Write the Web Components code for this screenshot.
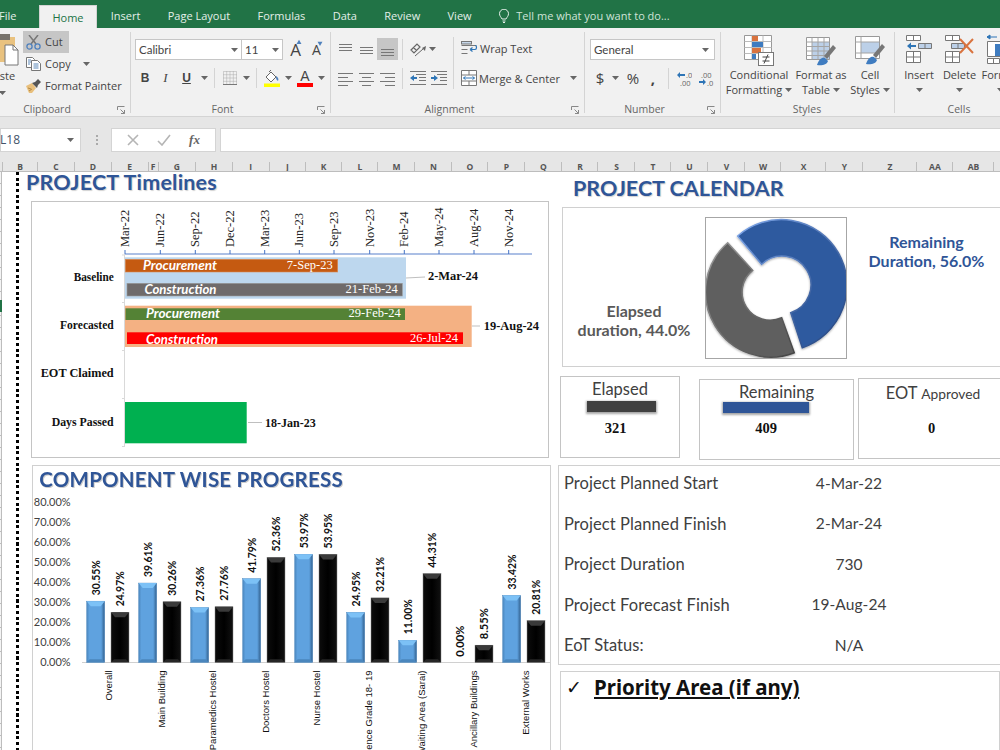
<!DOCTYPE html>
<html>
<head>
<meta charset="utf-8">
<title>Project dashboard</title>
<style>
  html, body { margin: 0; padding: 0; width: 1000px; height: 750px; overflow: hidden; background: #fff; }
</style>
</head>
<body>
<xl-tabs></xl-tabs>
<xl-ribbon></xl-ribbon>
<xl-formula-bar></xl-formula-bar>
<xl-columns></xl-columns>
<xl-sheet></xl-sheet>

<script>
// base class, every part renders its own markup in an open shadow root
class Part extends HTMLElement {
  connectedCallback() {
    if (this.shadowRoot) return;
    var template = document.createElement("TEMPLATE");
    template.innerHTML = this.markup();
    this.attachShadow({ mode: "open" }).appendChild(template.content.cloneNode(true));
  }
  attr(name, fallback) {
    return this.getAttribute(name) || fallback || '';
  }
}

const UI = '"Open Sans", "Noto Sans", sans-serif';
const arrow = `<svg width="7" height="4" viewBox="0 0 7 4"><path d="M0 0h7L3.5 4z" fill="#666"/></svg>`;

// ribbon icons
const ICONS = {
  paste: `<svg width="20" height="34" viewBox="0 0 20 34"><rect x="-6" y="3" width="21" height="25" fill="#e9c27f"/><rect x="-4" y="0" width="14" height="6" fill="#77736c"/><path d="M5 11h8l5 5v15H5z" fill="#fff" stroke="#777"/><path d="M13 11v5h5" fill="none" stroke="#777"/></svg>`,
  cut: `<svg width="15" height="15" viewBox="0 0 15 15"><path d="M3 0l7 9M12 0L5 9" stroke="#777" stroke-width="1.5" fill="none"/><circle cx="3.5" cy="11.5" r="2.6" fill="none" stroke="#4f81bd" stroke-width="1.3"/><circle cx="11.5" cy="11.5" r="2.6" fill="none" stroke="#4f81bd" stroke-width="1.3"/></svg>`,
  copy: `<svg width="15" height="14" viewBox="0 0 15 14"><path d="M.5.5h6l2 2v8h-8z" fill="#fff" stroke="#777"/><path d="M5.5 3.5h6l3 3v7h-9z" fill="#fff" stroke="#777"/><path d="M2 3h3M2 5h3M2 7h2M7.500 7h5M7.500 9h5M7.500 11h5" stroke="#5b87b8"/></svg>`,
  painter: `<svg width="15" height="14" viewBox="0 0 15 14"><path d="M0 7l6-3 4 5-4 5H3z" fill="#e8bf7c"/><path d="M2 9l3 1M3 12l3-2" stroke="#b58a45"/><path d="M6 4l3-1 3-3 3 3-3 3-1 3z" fill="#555"/></svg>`,
  borders: `<svg width="14" height="14" viewBox="0 0 14 14"><path d="M.5.5h13v13H.5zM7 .5v13M.5 7h13M.5 3.700h13M.5 10.300h13M3.700.5v13M10.300.5v13" fill="none" stroke="#aaa" stroke-dasharray="1 1"/><path d="M0 13.500h14" stroke="#777"/></svg>`,
  fill: `<svg width="16" height="17" viewBox="0 0 16 17"><path d="M2 7l5-5 5 5-5 5z" fill="#fff" stroke="#666"/><path d="M5 2l2-2" stroke="#666"/><path d="M12 6c2 1 3 3 2 5-2-1-2-3-2-5z" fill="#4f81bd"/><rect x="0" y="13.500" width="16" height="3.500" fill="#ffff00"/></svg>`,
  wrap: `<svg width="17" height="15" viewBox="0 0 17 15"><path d="M.5.5h9M.5 4.500h15M.5 8.500h6M.5 12.500h6" stroke="#777"/><rect x=".5" y=".5" width="10" height="2.500" fill="#c6d7ea" stroke="#777"/><path d="M9 8.500h5c2 0 2-4 0-4M9 8.500l2.500-2M9 8.500l2.500 2" fill="none" stroke="#2e75b6" stroke-width="1.200"/></svg>`,
  merge: `<svg width="16" height="16" viewBox="0 0 16 16"><path d="M.5.5h15v15H.5zM.5 5h15M.5 11h15M8 .5V5M8 11v4.500" fill="#fff" stroke="#777"/><path d="M2.500 8h11M2.500 8l2-1.500M2.500 8l2 1.500M13.500 8l-2-1.500M13.500 8l-2 1.500" fill="none" stroke="#2e75b6"/></svg>`,
  orient: `<svg width="16" height="15" viewBox="0 0 16 15"><path d="M1 8l6-6 3 3-6 6zM3.500 5.500l3 3" fill="none" stroke="#666" stroke-width="1.200"/><path d="M5 14l8-7" stroke="#666"/><path d="M16 4l-1 5-3-3z" fill="#666"/></svg>`,
  indentL: `<svg width="16" height="14" viewBox="0 0 16 14"><path d="M6 3.500h10M9 6.500h7M9 9.500h7M0 .5h16M0 13.500h16" stroke="#777"/><path d="M0 7l4-3v2h3v2H4v2z" fill="#2e75b6"/></svg>`,
  indentR: `<svg width="16" height="14" viewBox="0 0 16 14"><path d="M6 3.500h10M9 6.500h7M9 9.500h7M0 .5h16M0 13.500h16" stroke="#777"/><path d="M7 7L3 4v2H0v2h3v2z" fill="#2e75b6"/></svg>`,
  decUp: `<svg width="15" height="15" viewBox="0 0 15 15"><path d="M0 4l3-3v2h5v2H3v2z" fill="#2e75b6"/><text x="9" y="6.500" font-family="Open Sans" font-size="7.500" fill="#666">.0</text><text x="3" y="14.500" font-family="Open Sans" font-size="7.500" fill="#666">.00</text></svg>`,
  decDown: `<svg width="15" height="15" viewBox="0 0 15 15"><text x="2" y="6.500" font-family="Open Sans" font-size="7.500" fill="#666">.00</text><path d="M7 11L4 8v2H0v2h4v2z" fill="#2e75b6"/><text x="8" y="14.500" font-family="Open Sans" font-size="7.500" fill="#666">.0</text></svg>`,
  cond: `<svg width="30" height="32" viewBox="0 0 30 32"><path d="M.5.500h27v24H.5z" fill="#fff" stroke="#999"/><path d="M.5 6.500h27M.5 12.500h27M.5 18.500h27M8 .5v24M19 .5v24" stroke="#bbb"/><rect x="8" y="1" width="6" height="5" fill="#d9733f"/><rect x="8" y="7" width="11" height="5" fill="#3f7cc0"/><rect x="8" y="13" width="9" height="5" fill="#d9733f"/><rect x="8" y="19" width="4" height="5" fill="#3f7cc0"/><rect x="14.500" y="17.500" width="15" height="13" fill="#fff" stroke="#777"/><path d="M18.500 22h7M18.500 26h7M24 19.500l-4 9" stroke="#444"/></svg>`,
  table: `<svg width="30" height="30" viewBox="0 0 30 30"><path d="M.5.500h23v22H.5z" fill="#fff" stroke="#999"/><rect x="6" y="5" width="17" height="17" fill="#bcd0e8"/><path d="M.5 5h23M.5 9.500h23M.5 14h23M.5 18.500h23M6 .5v22M12 .5v22M18 .5v22" stroke="#a4a4a4"/><path d="M18 19l9-11 3 3-9 11z" fill="#777"/><path d="M19 21c-3-1-6 1-8 7 4 1 10 0 11-4z" fill="#3f7cc0"/></svg>`,
  cell: `<svg width="30" height="30" viewBox="0 0 30 30"><path d="M.5.500h24v22H.5z" fill="#fff" stroke="#999"/><rect x="6" y="6" width="18" height="11" fill="#bcd0e8"/><path d="M.5 6h24M.5 17h24M6 .5v22" stroke="#a4a4a4"/><path d="M18 19l9-11 3 3-9 11z" fill="#777"/><path d="M19 21c-3-1-6 1-8 7 4 1 10 0 11-4z" fill="#3f7cc0"/></svg>`,
  insert: `<svg width="26" height="28" viewBox="0 0 26 28"><path d="M.5.500h14v5H.5zM7.500.5v5M.5 16.500h14v11H.5zM.5 22h14M7.500 16.500v11" fill="#fff" stroke="#777"/><path d="M12.500 8.500h13v5h-13zM19 8.500v5" fill="#bcd0e8" stroke="#777"/><path d="M1 11l4-3.500V10h5v2H5v2.500z" fill="#2e75b6"/></svg>`,
  del: `<svg width="30" height="28" viewBox="0 0 30 28"><path d="M.5.500h14v5H.5zM7.500.5v5M.5 16.500h14v11H.5zM.5 22h14M7.500 16.500v11" fill="#fff" stroke="#777"/><path d="M6.500 8.500h13v5h-13zM13 8.500v5" fill="#bcd0e8" stroke="#777"/><path d="M15 4l13 14M28 4L15 18" stroke="#d9733f" stroke-width="2"/></svg>`,
  format: `<svg width="26" height="30" viewBox="0 0 26 30"><path d="M0 3h10M0 3l3-2v4z" stroke="#2e75b6" fill="#2e75b6"/><path d="M.5 7.500h25v15H.5z" fill="#fff" stroke="#777"/><rect x="8" y="10" width="17" height="12" fill="#3f7cc0"/><path d="M.5 24.500h12v5H.5zM6.500 24.500v5" fill="#fff" stroke="#777"/></svg>`
};

const launcher = `<svg class="launch" width="8" height="8" viewBox="0 0 8 8"><path d="M.5 4V.5H7.500M7.500 7.500L3.500 3.500M7.500 4v3.500H4" fill="none" stroke="#888"/></svg>`;

class XlTabs extends Part {
  markup() {
    const names = ['Insert', 'Page Layout', 'Formulas', 'Data', 'Review', 'View'];
    return `
    <style>
      :host { display: flex; height: 28px; background: #217346; color: #e4efe9; font: 11px/1 ${UI}; overflow: hidden; }
      span { display: flex; align-items: center; padding: 3px 13.700px 0; }
      .file { padding: 3px 24px 0 0; width: 16px; margin-left: -1px; box-sizing: content-box; }
      .home { background: #f1f1f1; color: #217346; margin-top: 5px; padding: 0; width: 58px; justify-content: center; border: 1px solid #d4d4d4; border-bottom: 0; box-sizing: border-box; height: 23px; }
      .tell { padding: 3px 0 0 0; margin-left: 14px; gap: 7px; white-space: nowrap; color: #cfe3d8; }
    </style>
    <span class="file">File</span><span class="home">Home</span>
    ${names.map(n => `<span>${n}</span>`).join('')}
    <span class="tell">
      <svg width="10" height="14" viewBox="0 0 10 14"><path d="M3 10C2 8 .5 7 .5 4.700a4.500 4.500 0 0 1 9 0C9.500 7 8 8 7 10zM3.500 12h3M4 13.500h2" fill="none" stroke="#e4efe9"/></svg>
      Tell me what you want to do...
    </span>`;
  }
}

class XlGroup extends Part {
  markup() {
    return `
    <style>
      :host { display: flex; flex-direction: column; flex: none; box-sizing: border-box; width: ${this.attr('w')}px; margin: 4px 0 3px; border-right: 1px solid #d4d4d4; position: relative; }
      .body { flex: 1; min-height: 0; }
      .label { height: 16px; margin-bottom: -4px; text-align: center; font: 10.500px/16px ${UI}; color: #666; }
      .launch { position: absolute; right: 5px; bottom: -1px; }
    </style>
    <div class="body"><slot></slot></div>
    <div class="label" style="${this.attr('label-style')}">${this.attr('label')}</div>
    ${this.hasAttribute('launch') ? launcher : ''}`;
  }
}

class ClipboardTools extends Part {
  markup() {
    return `
    <style>
      :host { display: flex; font: 11px/1 ${UI}; color: #444; }
      .paste { width: 23px; display: flex; flex-direction: column; padding-top: 2px; overflow: hidden; }
      .paste b { font-weight: 400; margin: 2px 0 0 -13px; }
      .paste .a { margin: 8px 0 0 -1px; line-height: 4px; }
      .rows { display: flex; flex-direction: column; margin-top: -1px; }
      .row { display: flex; align-items: center; gap: 4px; height: 22px; padding-left: 3px; white-space: nowrap; }
      .row span { margin-top: -2px; }
      .cut { width: 46px; background: #c6c6c6; box-sizing: border-box; }
      .row .a { margin: 0 0 0 8px; display: flex; }
    </style>
    <div class="paste">${ICONS.paste}<b>Paste</b><span class="a">${arrow}</span></div>
    <div class="rows">
      <div class="row cut">${ICONS.cut}<span>Cut</span></div>
      <div class="row">${ICONS.copy}<span>Copy</span><span class="a">${arrow}</span></div>
      <div class="row">${ICONS.painter}<span>Format Painter</span></div>
    </div>`;
  }
}

class FontTools extends Part {
  markup() {
    return `
    <style>
      :host { display: flex; flex-direction: column; padding: 7px 0 0 4px; font: 11px/1 ${UI}; color: #444; }
      .row { display: flex; align-items: center; }
      .box { display: flex; align-items: center; justify-content: space-between; height: 21px; box-sizing: border-box; background: #fff; border: 1px solid #c6c6c6; padding: 0 3px; font-family: Lato, sans-serif; font-size: 11.500px; }
      .a1 { font-size: 17px; width: 21px; text-align: center; margin-left: 2px; position: relative; }
      .a2 { font-size: 14px; width: 21px; text-align: center; position: relative; }
      .a1 svg, .a2 svg { position: absolute; left: 10px; top: -2px; }
      .two { margin-top: 8px; height: 20px; }
      .two > span { display: flex; justify-content: center; align-items: center; flex: none; height: 20px; }
      .b { font: bold 12px "Liberation Sans", sans-serif; }
      .i { font: italic 13px "Liberation Serif", serif; }
      .u { font: 12px "Liberation Sans", sans-serif; text-decoration: underline; font-weight: bold; }
      .sep { width: 1px; height: 21px; background: #d4d4d4; }
      .col { flex-direction: column; font: 14px/13px "Liberation Sans", sans-serif; }
      .col i { display: block; width: 16px; height: 4px; background: #f00; }
    </style>
    <div class="row">
      <div class="box" style="width:107px"><span>Calibri</span>${arrow}</div>
      <div class="box" style="width:42px;margin-left:-1px"><span>11</span>${arrow}</div>
      <div class="a1">A<svg width="8" height="6" viewBox="0 0 18 17"><path d="M2 14L9 2l7 12z" fill="#4f81bd"/></svg></div>
      <div class="a2">A<svg width="8" height="6" viewBox="0 0 18 17"><path d="M2 2l7 12 7-12z" fill="#4f81bd"/></svg></div>
    </div>
    <div class="row two">
      <span class="b" style="width:20px">B</span><span class="i" style="width:21px">I</span><span class="u" style="width:21px">U</span>
      <span style="width:14px">${arrow}</span><span style="width:3px"></span><span class="sep"></span><span style="width:5px"></span>
      <span style="width:20px">${ICONS.borders}</span><span style="width:12px">${arrow}</span><span style="width:4px"></span><span class="sep"></span>
      <span style="width:4px"></span><span style="width:21px">${ICONS.fill}</span><span style="width:12px">${arrow}</span>
      <span class="col" style="width:22px">A<i></i></span><span style="width:11px">${arrow}</span>
    </div>`;
  }
}

function rules(widths, align) {
  const y = [2, 6, 10, 14];
  return `<svg width="15" height="15" viewBox="0 0 15 15"><path d="${widths.map((w, i) => {
    const x = align === 'l' ? 0 : align === 'r' ? 15 - w : (15 - w) / 2;
    return `M${x} ${y[i] + .5}h${w}`;
  }).join('')}" stroke="#777"/></svg>`;
}

class AlignTools extends Part {
  markup() {
    const vert = (top) => `<svg width="15" height="15" viewBox="0 0 15 15"><path d="M1 ${top + .5}h13M1 ${top + 3.5}h13M1 ${top + 6.5}h13" stroke="#777"/></svg>`;
    return `
    <style>
      :host { display: flex; font: 11px/1 ${UI}; color: #444; }
      .grid { display: grid; grid-template-columns: 21px 21px 21px 9px 21px 21px; grid-template-rows: 22px 20px; row-gap: 8px; width: 122px; padding: 6px 0 0 4px; box-sizing: border-box; align-items: center; justify-items: center; }
      .on { background: #c6c6c6; width: 21px; height: 22px; display: flex; align-items: center; justify-content: center; }
      .sp { width: 1px; height: 21px; background: #d4d4d4; }
      .wide { grid-column: span 2; justify-self: start; display: flex; align-items: center; gap: 3px; padding-left: 3px; }
      .sep { width: 1px; height: 52px; margin-top: 5px; background: #d4d4d4; }
      .right { padding: 6px 0 0 7px; display: flex; flex-direction: column; gap: 10px; }
      .line { display: flex; align-items: center; gap: 2px; height: 20px; white-space: nowrap; }
      .line .a { margin-left: 8px; display: flex; }
    </style>
    <div class="grid">
      ${vert(2)}${vert(5)}<div class="on">${vert(7)}</div><span class="sp"></span><span class="wide">${ICONS.orient}${arrow}</span>
      ${rules([15, 10, 15, 10], 'l')}${rules([15, 9, 15, 9], 'c')}${rules([15, 10, 15, 10], 'r')}<span class="sp"></span>${ICONS.indentL}${ICONS.indentR}
    </div>
    <div class="sep"></div>
    <div class="right">
      <div class="line">${ICONS.wrap}<span>Wrap Text</span></div>
      <div class="line">${ICONS.merge}<span>Merge &amp; Center</span><span class="a">${arrow}</span></div>
    </div>`;
  }
}

class NumberTools extends Part {
  markup() {
    return `
    <style>
      :host { display: flex; flex-direction: column; padding: 7px 0 0 5px; font: 11.500px/1 ${UI}; color: #444; }
      .box { display: flex; align-items: center; justify-content: space-between; width: 125px; height: 21px; box-sizing: border-box; background: #fff; border: 1px solid #c6c6c6; padding: 0 5px 0 3px; font-family: Lato, sans-serif; }
      .row { display: flex; margin-top: 8px; height: 20px; }
      .row > span { display: flex; align-items: center; justify-content: center; flex: none; }
      .s { font-size: 15px; }
      .sp { width: 1px; height: 21px; background: #d4d4d4; margin: 0 7px 0 0; }
    </style>
    <div class="box"><span>General</span>${arrow}</div>
    <div class="row">
      <span class="s" style="width:20px">$</span><span style="width:10px">${arrow}</span>
      <span class="s" style="width:26px">%</span><span class="s" style="width:14px;font-weight:700">,</span>
      <span style="width:8px"></span><span class="sp"></span>
      <span style="width:16px">${ICONS.decUp}</span><span style="width:6px"></span><span style="width:16px">${ICONS.decDown}</span>
    </div>`;
  }
}

class BigButton extends Part {
  markup() {
    return `
    <style>
      :host { display: flex; flex-direction: column; align-items: center; flex: none; width: ${this.attr('w')}px; font: 11px/15px ${UI}; color: #444; text-align: center; white-space: nowrap; }
      .ic { height: 35px; box-sizing: border-box; padding-top: ${this.attr('pad', '3')}px; display: flex; align-items: flex-start; justify-content: center; }
      .t { height: 15px; display: flex; align-items: center; justify-content: center; gap: 3px; }
    </style>
    <div class="ic">${ICONS[this.attr('icon')]}</div>
    <div class="t">${this.attr('one')}</div>
    <div class="t">${this.attr('two')}${arrow}</div>`;
  }
}

class XlRibbon extends Part {
  markup() {
    return `
    <style>
      :host { display: flex; height: 88px; background: #f1f1f1; overflow: hidden; border-bottom: 1px solid #d4d4d4; box-sizing: content-box; }
    </style>
    <xl-group w="131" label="Clipboard" label-style="width:94px" launch><clipboard-tools></clipboard-tools></xl-group>
    <xl-group w="200" label="Font" label-style="margin-left:-16px" launch><font-tools></font-tools></xl-group>
    <xl-group w="254" label="Alignment" label-style="margin-left:-16px" launch><align-tools></align-tools></xl-group>
    <xl-group w="136" label="Number" label-style="margin-left:-16px" launch><number-tools></number-tools></xl-group>
    <xl-group w="174" label="Styles" label-style="margin-left:-1px">
      <div style="display:flex;padding-left:6px">
        <big-button w="64" icon="cond" one="Conditional" two="Formatting"></big-button>
        <big-button w="60" icon="table" one="Format as" two="Table" pad="5"></big-button>
        <big-button w="38" icon="cell" one="Cell" two="Styles" pad="4"></big-button>
      </div>
    </xl-group>
    <xl-group w="135" label="Cells" label-style="width:128px">
      <div style="display:flex;padding-left:4px">
        <big-button w="40" icon="insert" one="Insert" pad="3"></big-button>
        <big-button w="41" icon="del" one="Delete" pad="3"></big-button>
        <big-button w="40" icon="format" one="Format" pad="2"></big-button>
      </div>
    </xl-group>`;
  }
}

class XlFormulaBar extends Part {
  markup() {
    return `
    <style>
      :host { display: flex; align-items: flex-start; height: 36px; box-sizing: border-box; padding-top: 11px; background: #e6e6e6; font: 12px/1 ${UI}; color: #44546a; }
      .white { background: #fff; height: 24px; box-sizing: border-box; border: 1px solid #d4d4d4; display: flex; align-items: center; }
      .name { width: 81px; justify-content: space-between; padding-right: 6px; margin-right: 30px; position: relative; }
      .name span { margin-left: -1px; }
      .dots { position: absolute; left: 95px; top: 6px; width: 2px; height: 11px; background: repeating-linear-gradient(#aaa 0 2px, transparent 2px 4px); }
      .btns { width: 105px; margin-right: 4px; justify-content: space-around; padding: 0 6px; color: #999; }
      .fx { font: italic bold 13px "Liberation Serif", serif; color: #666; }
      .input { flex: 1; border-right: 0; }
    </style>
    <div class="white name"><span>L18</span>${arrow}<i class="dots"></i></div>
    <div class="white btns">
      <svg width="12" height="12" viewBox="0 0 12 12"><path d="M1 1l10 10M11 1L1 11" stroke="#b5b5b5" stroke-width="1.600"/></svg>
      <svg width="14" height="12" viewBox="0 0 14 12"><path d="M1 7l4 4 8-10" fill="none" stroke="#b5b5b5" stroke-width="1.600"/></svg>
      <span class="fx">fx</span>
    </div>
    <div class="white input"></div>`;
  }
}

class XlColumns extends Part {
  markup() {
    const cols = [
      ['', 3], ['B', 35], ['C', 37], ['D', 37], ['E', 36.500], ['F', 10], ['G', 37.500], ['H', 37], ['I', 36.500], ['J', 36.700],
      ['K', 36], ['L', 36.300], ['M', 37], ['N', 37], ['O', 36], ['P', 37], ['Q', 37], ['R', 36], ['S', 37], ['T', 36], ['U', 37], ['V', 37],
      ['W', 36], ['X', 45], ['Y', 37], ['Z', 54], ['AA', 36], ['AB', 41]];
    return `
    <style>
      :host { display: flex; height: 19px; box-sizing: border-box; background: #e6e6e6; border-bottom: 1px solid #bdbdbd; font: bold 8.500px/1 ${UI}; color: #555; overflow: hidden; }
      span { flex: none; box-sizing: border-box; text-align: center; border-right: 1px solid #bdbdbd; height: 9px; margin-top: 9px; line-height: 9px; }
    </style>
    ${cols.map(c => `<span style="width:${c[1]}px">${c[0]}</span>`).join('')}`;
  }
}

class SectionTitle extends Part {
  markup() {
    return `
    <style>
      :host { display: block; font: 700 ${this.attr('size', '21')}px/1 Lato, sans-serif; letter-spacing: ${this.attr('spacing', '0')}px; color: #2f5597; text-shadow: 1px 1px 1px rgba(0,0,0,.18); white-space: nowrap; }
    </style>
    <slot></slot>`;
  }
}

function fit(x, y, text, len, attrs) {
  return `<text x="${x}" y="${y}" textLength="${len}" lengthAdjust="spacingAndGlyphs" ${attrs || ''}>${text}</text>`;
}

class TimelineChart extends Part {
  markup() {
    const months = ['Mar-22', 'Jun-22', 'Sep-22', 'Dec-22', 'Mar-23', 'Jun-23', 'Sep-23', 'Nov-23', 'Feb-24', 'May-24', 'Aug-24', 'Nov-24'];
    const ticks = [125, 160.300, 195.300, 230, 264.700, 299.300, 334, 369.700, 404.300, 439, 474, 508.700];
    const cats = [['Baseline', 281, 40], ['Forecasted', 329, 53.700], ['EOT Claimed', 377, 73], ['Days Passed', 425.700, 62]];
    return `
    <style>
      :host { display: block; box-sizing: border-box; width: 518px; height: 257px; border: 1px solid #c4c4c4; background: #fff; }
      svg { display: block; }
      .m { font: 12.500px "Liberation Serif", serif; fill: #222; }
      .cat { font: bold 12px "Liberation Serif", serif; fill: #111; }
      .it { font: italic 700 13px Lato, sans-serif; fill: #fff; }
      .d { font: 12.500px "Liberation Serif", serif; fill: #fff; text-anchor: end; }
      .lab { font: bold 13px "Liberation Serif", serif; fill: #111; }
    </style>
    <svg width="516" height="255" viewBox="32 202 516 255">
      <path d="M124.500 254V447M122 302.500h3M122 350.500h3M122 398.500h3M122 446.500h3M122 255h3" stroke="#d9d9d9" fill="none"/>
      <rect x="125" y="257.300" width="281" height="41.400" fill="#bdd7ee"/>
      <rect x="125.300" y="259.300" width="212.400" height="12.700" fill="#c55a11" stroke="#d98a55" stroke-width=".6"/>
      <rect x="127" y="283.300" width="275.300" height="12.700" fill="#6f6b6b" stroke="#9a9a9a" stroke-width=".6"/>
      <rect x="125" y="305.700" width="346.700" height="41.300" fill="#f4b183"/>
      <rect x="125.500" y="308.300" width="279.500" height="11.700" fill="#548235"/>
      <rect x="127" y="332.300" width="336" height="11.700" fill="#ff0000"/>
      <rect x="125" y="402" width="121.700" height="41.300" fill="#00b050"/>
      <path d="M125 254H532" stroke="#8faadc" stroke-width="1.600"/>
      ${ticks.map(x => `<path d="M${x} 250v4" stroke="#4472c4"/>`).join('')}
      ${months.map((m, i) => `<text class="m" transform="translate(${ticks[i] + 4} 247) rotate(-90)">${m}</text>`).join('')}
      ${cats.map(c => fit(113.700 - c[2], c[1], c[0], c[2], 'class="cat"')).join('')}
      ${fit(143, 270, 'Procurement', 74, 'class="it"')}
      ${fit(144.500, 293.700, 'Construction', 72, 'class="it"')}
      ${fit(146, 317.700, 'Procurement', 74, 'class="it"')}
      ${fit(146, 344, 'Construction', 72, 'class="it"')}
      <text class="d" x="332.700" y="269">7-Sep-23</text>
      <text class="d" x="397.700" y="293.300">21-Feb-24</text>
      <text class="d" x="400.700" y="317">29-Feb-24</text>
      <text class="d" x="458" y="341.700">26-Jul-24</text>
      <path d="M406 278l19-1M472 326h8M248 422.500h14" stroke="#bfbfbf" fill="none"/>
      ${fit(428, 280, '2-Mar-24', 50, 'class="lab"')}
      ${fit(483.700, 329.700, '19-Aug-24', 55.300, 'class="lab"')}
      ${fit(265, 427, '18-Jan-23', 50.700, 'class="lab"')}
    </svg>`;
  }
}

class ProgressChart extends Part {
  markup() {
    const data = [
      ['Overall', 30.55, 24.97, 108.300], ['Main Building', 39.61, 30.26, 161.700], ['Paramedics Hostel', 27.36, 27.76, 212.700],
      ['Doctors Hostel', 41.79, 52.36, 265], ['Nurse Hostel', 53.97, 53.95, 316.700], ['Residence Grade 18- 19', 24.95, 32.21, 368.300],
      ['Waiting Area (Sarai)', 11.00, 44.31, 421.700], ['Ancillary Buildings', 0, 8.55, 473.300], ['External Works', 33.42, 20.81, 525]];
    const y0 = 662.300;
    const bar = (x, v, kind) => {
      if (!v) return '';
      const top = y0 - v * 2;
      const h = v * 2;
      const light = kind === 'b' ? '#7cc1f6' : '#3a3a3a';
      const low = kind === 'b' ? '#4a86bd' : '#262626';
      return `<rect x="${x}" y="${top}" width="18" height="${h}" fill="url(#${kind})" stroke="${kind === 'b' ? '#4f88bd' : '#8a8a8a'}" stroke-width=".5"/>
        <path d="M${x} ${top}h18l-4 5h-10z" fill="${light}"/>
        <path d="M${x} ${y0}h18l-3-3h-12z" fill="${low}"/>`;
    };
    const label = (x, v) => `<text class="v" transform="translate(${x + 13} ${y0 - v * 2 - 6}) rotate(-90)" textLength="${v < 10 ? 31 : 35}" lengthAdjust="spacingAndGlyphs">${v.toFixed(2)}%</text>`;
    let bars = '', names = '';
    data.forEach((d, i) => {
      const bx = 86.700 + 52 * i, kx = 111 + 52 * i;
      bars += bar(bx, d[1], 'b') + bar(kx, d[2], 'k');
      bars += d[1] ? label(bx, d[1]) : `<text class="v" transform="translate(${bx + 13.500} 656.700) rotate(-90)" textLength="31" lengthAdjust="spacingAndGlyphs">0.00%</text>`;
      bars += label(kx, d[2]);
      names += `<text class="x" transform="translate(${d[3] + 3.500} 670.500) rotate(-90)">${d[0]}</text>`;
    });
    let ys = '';
    for (let i = 0; i <= 8; i++) ys += `<text class="y" x="70.700" y="${y0 + 4 - i * 20}">${(i * 10).toFixed(2)}%</text>`;
    return `
    <style>
      :host { display: block; box-sizing: border-box; width: 519px; height: 300px; border: 1px solid #d0d0d0; background: #fff; }
      svg { display: block; }
      .v { font: bold 11.500px Lato, sans-serif; fill: #111; }
      .x { font: 9.500px "Liberation Sans", sans-serif; fill: #111; text-anchor: end; }
      .y { font: 11px Lato, sans-serif; fill: #404040; text-anchor: end; }
      .t { font: 700 20.500px Lato, sans-serif; fill: #2f5597; }
    </style>
    <svg width="517" height="298" viewBox="33 466 517 298">
      <defs>
        <linearGradient id="b"><stop offset="0" stop-color="#4a86bd"/><stop offset=".15" stop-color="#5fa2df"/><stop offset=".8" stop-color="#5fa2df"/><stop offset="1" stop-color="#315f8c"/></linearGradient>
        <linearGradient id="k"><stop offset="0" stop-color="#0c0c0c"/><stop offset=".5" stop-color="#000"/><stop offset="1" stop-color="#111"/></linearGradient>
      </defs>
      <text class="t" x="39.300" y="486.700" textLength="303.400" lengthAdjust="spacing" style="filter:drop-shadow(1px 1px .6px rgba(0,0,0,.2))">COMPONENT WISE PROGRESS</text>
      ${ys}
      <path d="M82 662.500H551" stroke="#d0d0d0"/>
      ${bars}
      ${names}
    </svg>`;
  }
}

class DonutCard extends Part {
  markup() {
    return `
    <style>
      :host { display: grid; grid-template-columns: 142px 141.500px 160px; box-sizing: border-box; width: 446px; height: 160px; border: 1px solid #d0d0d0; background: #fff; font: 700 16px/19px Lato, sans-serif; text-align: center; }
      .el { color: #595959; align-self: start; padding-top: 93px; }
      .re { color: #2f5597; align-self: start; padding-top: 24px; }
      .frame { margin-top: 8.500px; width: 141.500px; height: 142px; box-sizing: border-box; border: 1px solid #a6a6a6; overflow: hidden; }
      svg { display: block; }
    </style>
    <div class="el">Elapsed<br>duration, 44.0%</div>
    <div class="frame">
      <svg width="140" height="140" viewBox="706 217 140 140">
        <defs>
          <linearGradient id="be" x1="0" y1="0" x2="1" y2="1"><stop offset="0" stop-color="#7da6ea"/><stop offset="1" stop-color="#1f3f78"/></linearGradient>
          <linearGradient id="ge" x1="0" y1="0" x2="1" y2="1"><stop offset="0" stop-color="#9a9a9a"/><stop offset="1" stop-color="#444"/></linearGradient>
          <filter id="sh"><feDropShadow dx="0" dy="1" stdDeviation="1" flood-color="#000" flood-opacity=".35"/></filter>
        </defs>
        <path d="M737.700 235A65.800 65.800 0 1 1 802.300 346.700L790.700 311.700A29 29 0 1 0 761.700 263.300Z" fill="#2f5a9f" stroke="url(#be)" stroke-width="1.500" filter="url(#sh)"/>
        <path d="M727.700 241.700A65.300 65.300 0 0 0 794.300 351.700L781.700 316.700A28 28 0 0 1 752.700 269.300Z" fill="#5f5f5f" stroke="url(#ge)" stroke-width="1.500" filter="url(#sh)"/>
      </svg>
    </div>
    <div class="re">Remaining<br>Duration, 56.0%</div>`;
  }
}

class StatCard extends Part {
  markup() {
    const c = this.attr('color');
    return `
    <style>
      :host { display: block; flex: none; box-sizing: border-box; width: ${this.attr('w')}px; height: ${this.attr('h')}px; margin-top: ${this.attr('top', '0')}px; margin-left: ${this.attr('left', '0')}px; border: 1px solid #c4c4c4; background: #fff; color: #404040; font: 16.500px/1 Lato, sans-serif; }
      .l { text-align: center; padding-top: ${this.attr('lt', '4')}px; height: 16px; white-space: nowrap; }
      .l small { font-size: 14px; }
      .bar { height: 10.500px; margin-left: ${this.attr('bx', '0')}px; width: ${this.attr('bw', '0')}px; margin-top: ${this.attr('bt', '0')}px; background: ${c}; box-shadow: 0 1px 2px 1px rgba(0,0,0,.35); }
      .v { text-align: center; font: bold 14.500px/1 "Liberation Serif", serif; color: #111; margin-left: ${this.attr('vx', '0')}px; margin-top: ${this.attr('vt', '11')}px; }
    </style>
    <div class="l"><slot></slot></div>
    ${c ? '<div class="bar"></div>' : ''}
    <div class="v">${this.attr('value')}</div>`;
  }
}

class InfoTable extends Part {
  markup() {
    const rows = [['Project Planned Start', '4-Mar-22'], ['Project Planned Finish', '2-Mar-24'], ['Project Duration', '730'], ['Project Forecast Finish', '19-Aug-24'], ['EoT Status:', 'N/A']];
    return `
    <style>
      :host { display: block; box-sizing: border-box; width: 446px; height: 200px; border: 1px solid #d0d0d0; background: #fff; color: #404040; font: 16.500px/1 Lato, sans-serif; letter-spacing: .08px; }
      .rows { display: grid; grid-template-columns: 200px 180px; grid-auto-rows: 40.500px; align-items: center; margin-top: -3px; }
      .k { padding-left: 5px; }
      .n { text-align: center; font-size: 15.500px; }
    </style>
    <div class="rows">${rows.map(r => `<div class="k">${r[0]}</div><div class="n">${r[1]}</div>`).join('')}</div>`;
  }
}

class PriorityBox extends Part {
  markup() {
    return `
    <style>
      :host { display: flex; align-items: flex-start; box-sizing: border-box; width: 440px; height: 100px; border: 1px solid #d0d0d0; background: #fff; color: #111; padding: 3px 0 0 5px; }
      .c { font: 19px/24px "DejaVu Sans", sans-serif; width: 28px; }
      .t { font: 700 20.500px/24px "Noto Sans", sans-serif; text-decoration: underline; white-space: nowrap; }
    </style>
    <span class="c">&#10003;</span><span class="t"><slot></slot></span>`;
  }
}

class XlSheet extends Part {
  markup() {
    return `
    <style>
      :host { display: grid; grid-template-columns: 2px 14px 3px 8px 531px 1fr; height: 578px; background: #fff; }
      .rows { background: repeating-linear-gradient(#f4f4f4 0 11px, #bdbdbd 11px 12px); border-right: 1px solid #bdbdbd; box-sizing: border-box; position: relative; }
      .rows i { position: absolute; left: 0; top: 128px; width: 2px; height: 12px; background: #217346; }
      .dots { grid-column: 3; background: repeating-linear-gradient(#000 0 3px, transparent 3px 5.700px); }
      .left { grid-column: 5; }
      .left section-title { height: 29px; margin-left: -1px; }
      .left timeline-chart { margin-left: 4px; }
      .left progress-chart { margin: 7px 0 0 5px; }
      .right { grid-column: 6; padding-top: 6px; min-width: 0; }
      .right section-title { height: 29px; margin-left: 15px; }
      .right donut-card { margin-left: 4px; }
      .stats { display: flex; height: 83px; margin: 9px 0 0 2px; }
      .right info-table { margin-top: 6px; }
      .right priority-box { margin: 6px 0 0 2px; }
    </style>
    <div class="rows"><i></i></div>
    <div></div>
    <div class="dots"></div>
    <div></div>
    <div class="left">
      <section-title size="21.500" spacing=".2">PROJECT Timelines</section-title>
      <timeline-chart></timeline-chart>
      <progress-chart></progress-chart>
    </div>
    <div class="right">
      <section-title size="21.500">PROJECT CALENDAR</section-title>
      <donut-card></donut-card>
      <div class="stats">
        <stat-card w="120" h="82" color="#404040" bx="26" bw="69" bt="4" value="321" vx="-9" vt="9">Elapsed</stat-card>
        <stat-card w="155" h="81" top="3" left="19" color="#2f5597" bx="23" bw="86" bt="2" value="409" vx="-21" vt="8">Remaining</stat-card>
        <stat-card w="150" h="81" top="2" left="4" lt="6" vt="20" value="0" vx="-3">EOT <small>Approved</small></stat-card>
      </div>
      <info-table></info-table>
      <priority-box>Priority Area (if any)</priority-box>
    </div>`;
  }
}

[['xl-tabs', XlTabs], ['xl-group', XlGroup], ['clipboard-tools', ClipboardTools], ['font-tools', FontTools], ['align-tools', AlignTools],
 ['number-tools', NumberTools], ['big-button', BigButton], ['xl-ribbon', XlRibbon], ['xl-formula-bar', XlFormulaBar], ['xl-columns', XlColumns],
 ['section-title', SectionTitle], ['timeline-chart', TimelineChart], ['progress-chart', ProgressChart], ['donut-card', DonutCard],
 ['stat-card', StatCard], ['info-table', InfoTable], ['priority-box', PriorityBox], ['xl-sheet', XlSheet]
].forEach(d => customElements.define(d[0], d[1]));
</script>
</body>
</html>
